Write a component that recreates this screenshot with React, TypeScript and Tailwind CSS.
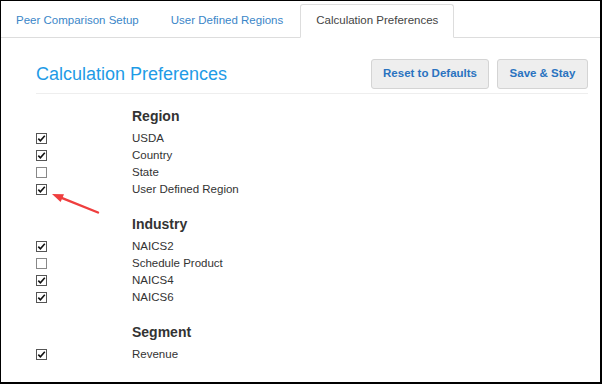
import React from "react"

type Item = { label: string; checked: boolean }

const sections: { title: string; items: Item[] }[] = [
  {
    title: "Region",
    items: [
      { label: "USDA", checked: true },
      { label: "Country", checked: true },
      { label: "State", checked: false },
      { label: "User Defined Region", checked: true },
    ],
  },
  {
    title: "Industry",
    items: [
      { label: "NAICS2", checked: true },
      { label: "Schedule Product", checked: false },
      { label: "NAICS4", checked: true },
      { label: "NAICS6", checked: true },
    ],
  },
  {
    title: "Segment",
    items: [{ label: "Revenue", checked: true }],
  },
]

function Checkbox({ checked }: { checked: boolean }) {
  return (
    <svg width="11" height="11" viewBox="0 0 11 11" className="block">
      <rect
        x="0.5"
        y="0.5"
        width="10"
        height="10"
        fill="white"
        stroke={checked ? "#555" : "#888"}
      />
      {checked && (
        <path d="M2.3 5.6 L4.4 7.8 L8.8 2.8" fill="none" stroke="#111" strokeWidth="1.6" />
      )}
    </svg>
  )
}

export default function App() {
  return (
    <div
      className="relative w-[602px] h-[384px] bg-white border-l border-t border-r-2 border-b-2 border-black overflow-hidden"
      style={{ fontFamily: '"Liberation Sans", Arial, sans-serif' }}
    >
      {/* Tabs */}
      <div className="flex items-end h-[37px] border-b border-[#ddd]">
        <div className="px-[15px] mr-[2px] h-[33px] flex items-center text-[11.5px] text-[#3a86c8]">
          Peer Comparison Setup
        </div>
        <div className="px-[15px] mr-[2px] h-[33px] flex items-center text-[11.5px] text-[#3a86c8]">
          User Defined Regions
        </div>
        <div className="px-[15px] h-[34px] mb-[-1px] flex items-center text-[11.5px] text-[#444] bg-white border border-[#ddd] border-b-white rounded-t-[3px]">
          Calculation Preferences
        </div>
      </div>

      <div className="pl-[35px] pr-[12px]">
        {/* Header */}
        <div className="mt-[21px] pb-[4px] border-b border-[#eee] flex items-center justify-between">
          <h1 className="text-[18px] text-[#1e9be6] leading-none">Calculation Preferences</h1>
          <div className="flex gap-[8px]">
            <button className="w-[118px] h-[30px] rounded-[3px] border border-[#d4d4d4] bg-[#eeeeee] text-[11.5px] font-bold text-[#2a73c0]">
              Reset to Defaults
            </button>
            <button className="w-[91px] h-[30px] rounded-[3px] border border-[#d4d4d4] bg-[#eeeeee] text-[11.5px] font-bold text-[#2a73c0]">
              Save &amp; Stay
            </button>
          </div>
        </div>

        {/* Sections */}
        <div className="mt-[12px]">
          {sections.map((s, i) => (
            <div key={s.title} className={i > 0 ? "mt-[16px]" : ""}>
              <div className="pl-[96px] h-[20px] flex items-center text-[14px] font-bold text-[#333]">
                {s.title}
              </div>
              <div className="mt-[4px]">
                {s.items.map((it) => (
                  <div key={it.label} className="grid grid-cols-[96px_1fr] items-center h-[17px]">
                    <Checkbox checked={it.checked} />
                    <span className="text-[11.5px] text-[#333]">{it.label}</span>
                  </div>
                ))}
              </div>
            </div>
          ))}
        </div>
      </div>

      {/* Annotation arrow */}
      <svg
        className="absolute left-[45px] top-[185px]"
        width="60"
        height="32"
        viewBox="0 0 60 32"
      >
        <line x1="15" y1="11.6" x2="52" y2="26.5" stroke="#ef3e3e" strokeWidth="2.4" strokeLinecap="round" />
        <polygon points="6,8 18,8.2 14.6,16" fill="#ef3e3e" />
      </svg>
    </div>
  )
}
